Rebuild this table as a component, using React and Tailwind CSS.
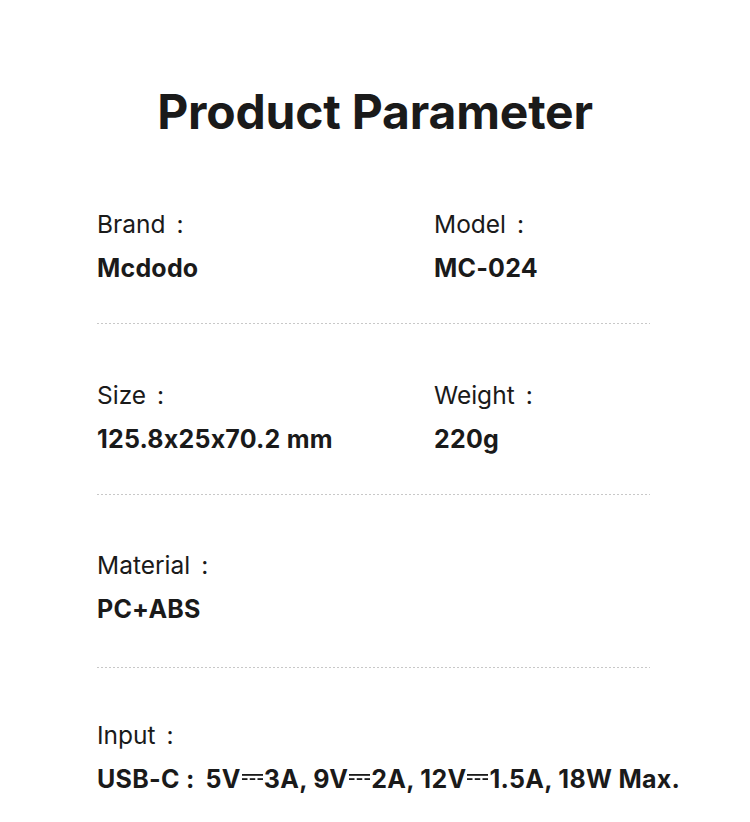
const DC = () => (
  <svg width="21" height="6" viewBox="0 0 21 6" className="inline-block align-[8px] mx-[1px]">
    <rect x="0" y="0" width="21" height="1.8" fill="#1a1a1a" />
    <rect x="0" y="4.2" width="5.5" height="1.8" fill="#1a1a1a" />
    <rect x="7.75" y="4.2" width="5.5" height="1.8" fill="#1a1a1a" />
    <rect x="15.5" y="4.2" width="5.5" height="1.8" fill="#1a1a1a" />
  </svg>
);

export default function App() {
  const Cell = ({ label, value }) => (
    <div className="flex flex-col">
      <div className="text-[24.5px] leading-[30px] text-[#1a1a1a] font-normal">
        {label}<span className="ml-[11px]">:</span>
      </div>
      <div className="mt-[14px] text-[25px] leading-[30px] text-[#1a1a1a] font-bold tracking-[0.2px]">{value}</div>
    </div>
  );
  const Line = () => (
    <div className="h-px w-[553px] bg-[repeating-linear-gradient(to_right,#c8c8c8_0_2px,transparent_2px_4px)]" />
  );
  return (
    <div
      className="w-[750px] h-[822px] bg-white overflow-hidden [font-feature-settings:'calt'_0]"
      style={{ fontFamily: 'Inter, "Noto Sans", sans-serif' }}
    >
      <h1 className="pt-[80px] text-center text-[48px] leading-[64px] font-bold text-[#1a1a1a] tracking-[-0.2px]">Product Parameter</h1>
      <div className="pl-[97px] pt-[65px]">
        <div className="grid grid-cols-[337px_1fr]">
          <Cell label="Brand" value="Mcdodo" />
          <Cell label="Model" value="MC-024" />
        </div>
        <div className="mt-[40px]"><Line /></div>
        <div className="mt-[56px] grid grid-cols-[337px_1fr]">
          <Cell label="Size" value="125.8x25x70.2 mm" />
          <Cell label="Weight" value="220g" />
        </div>
        <div className="mt-[40px]"><Line /></div>
        <div className="mt-[55px]">
          <Cell label="Material" value="PC+ABS" />
        </div>
        <div className="mt-[43px]"><Line /></div>
        <div className="mt-[52px]">
          <Cell
            label="Input"
            value={
              <span className="whitespace-nowrap tracking-[0.3px]">
                USB-C<span className="ml-[6px]">:</span>
                <span className="ml-[11px]">5V</span><DC />3A, 9V<DC />2A, 12V<DC />1.5A, 18W Max.
              </span>
            }
          />
        </div>
      </div>
    </div>
  );
}
